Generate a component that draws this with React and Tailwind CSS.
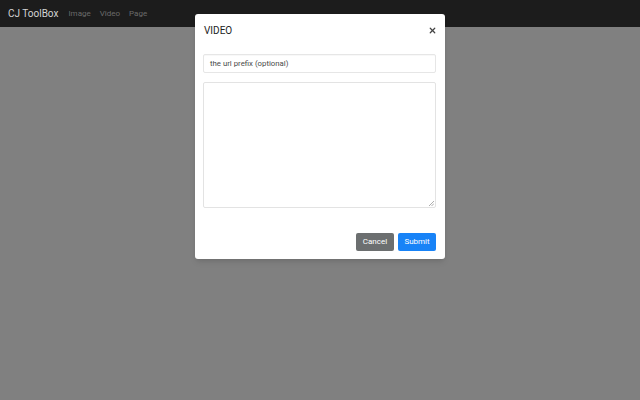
import { X } from "lucide-react";

const links = ["Image", "Video", "Page"];

function NavBar() {
  return (
    <div className="h-[27px] bg-[#1c1c1c] flex items-center px-2">
      <span className="text-[10px] text-[#d4d4d4] mr-[10px]">CJ ToolBox</span>
      <div className="flex gap-[9px]">
        {links.map((l) => (
          <span key={l} className="text-[8px] text-[#6b6b6b]">
            {l}
          </span>
        ))}
      </div>
    </div>
  );
}

function VideoModal() {
  return (
    <div className="absolute inset-x-0 top-[14px] flex justify-center">
      <div className="w-[250px] h-[245px] bg-white rounded-[3px] shadow-md flex flex-col pl-2 pr-[9px]">
        {/* header */}
        <div className="h-[32px] flex items-center justify-between pl-[1px] pt-[1px]">
          <span className="text-[10px] text-[#222]">VIDEO</span>
          <X size={9} strokeWidth={3.2} className="text-[#444] -mr-[1px]" />
        </div>
        {/* body */}
        <div className="pt-[8px] flex flex-col gap-[9px]">
          <div className="h-[19px] border border-[#e6e6e6] rounded-[2px] flex items-center px-[6px] shadow-[inset_0_1px_1px_rgba(0,0,0,0.03)]">
            <span className="text-[7.8px] text-[#4a4a4a]">
              the url prefix (optional)
            </span>
          </div>
          <div className="h-[126px] border border-[#e3e3e3] rounded-[2px] relative">
            <svg
              width="5"
              height="5"
              viewBox="0 0 5 5"
              className="absolute right-[1px] bottom-[1px]"
            >
              <path d="M5 0L0 5M5 2.5L2.5 5" stroke="#999" strokeWidth="0.8" />
            </svg>
          </div>
        </div>
        {/* footer */}
        <div className="mt-auto mb-[8px] flex justify-end gap-[4px]">
          <button className="w-[38px] h-[18px] rounded-[2px] bg-[#6c6f70] text-white text-[8px]">
            Cancel
          </button>
          <button className="w-[38px] h-[18px] rounded-[2px] bg-[#1883f7] text-white text-[8px]">
            Submit
          </button>
        </div>
      </div>
    </div>
  );
}

export default function App() {
  return (
    <div
      className="relative w-[640px] h-[400px] bg-[#808080] overflow-hidden"
      style={{ fontFamily: "Roboto, 'Liberation Sans', sans-serif" }}
    >
      <NavBar />
      <VideoModal />
    </div>
  );
}
